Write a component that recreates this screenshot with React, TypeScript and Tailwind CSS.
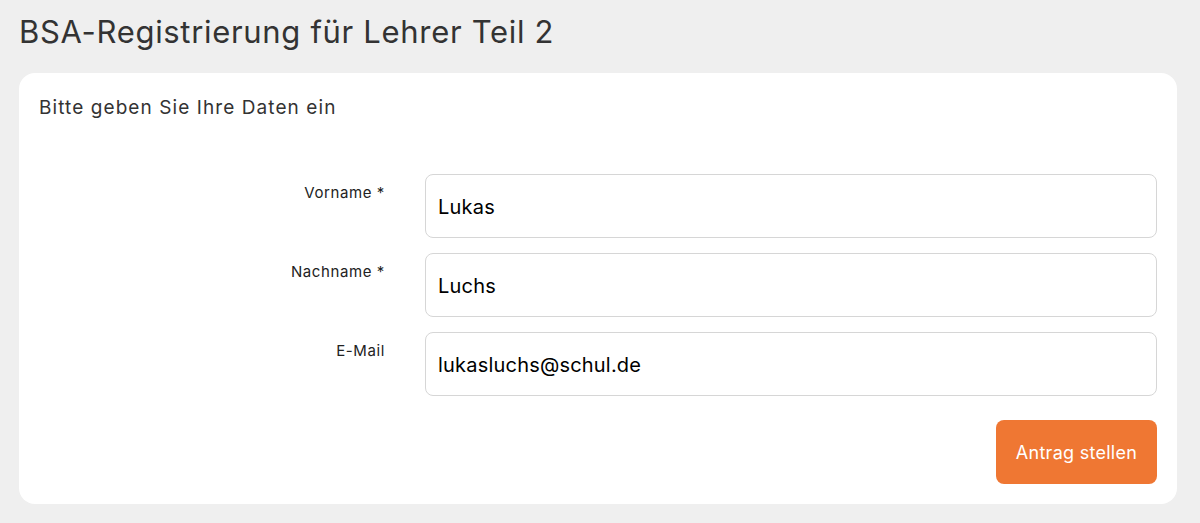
import React from 'react';

const fields = [
  { label: 'Vorname *', value: 'Lukas' },
  { label: 'Nachname *', value: 'Luchs' },
  { label: 'E-Mail', value: 'lukasluchs@schul.de' },
];

export default function App() {
  return (
    <div className="min-h-[523px] bg-[#efefef] px-[19px] pt-[13px] font-['Inter',sans-serif] text-[#333]">
      <h1 className="text-[31px] leading-[38px] font-normal tracking-[0.022em] text-[#333]">
        BSA-Registrierung für Lehrer Teil 2
      </h1>
      <div className="mt-[22px] w-[1158px] rounded-[16px] bg-white px-[20px] pt-[24px] pb-[20px]">
        <p className="text-[19px] leading-[22px] tracking-[0.057em] text-[#333]">
          Bitte geben Sie Ihre Daten ein
        </p>
        <form className="mt-[55px] flex flex-col gap-[15px]">
          {fields.map((f) => (
            <div key={f.label} className="flex items-start gap-[40px]">
              <label className="w-[346px] shrink-0 pt-[10px] text-right text-[15px] leading-[18px] tracking-[0.04em] text-[#222]">
                {f.label}
              </label>
              <input
                readOnly
                value={f.value}
                className="h-[64px] flex-1 rounded-[8px] border border-[#d6d6d6] bg-white px-[12px] pt-[2px] text-[20px] tracking-[0.01em] text-black outline-none"
              />
            </div>
          ))}
          <div className="mt-[9px] flex justify-end">
            <button
              type="button"
              className="h-[64px] w-[161px] rounded-[8px] bg-[#ef7733] text-[18px] tracking-[0.015em] text-white"
            >
              Antrag stellen
            </button>
          </div>
        </form>
      </div>
    </div>
  );
}
